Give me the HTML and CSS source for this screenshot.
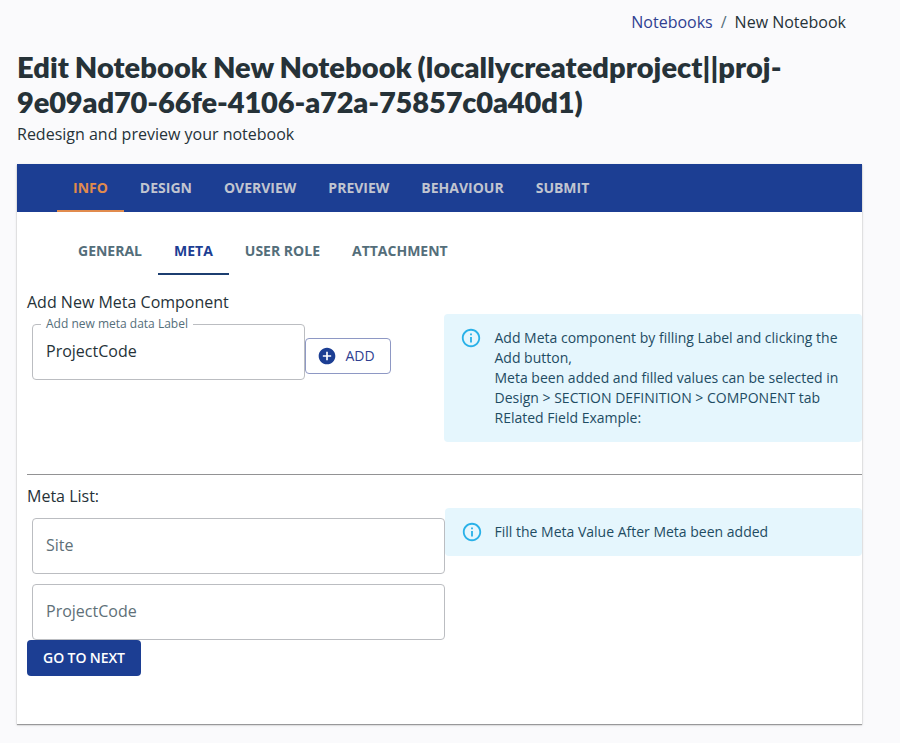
FILE: index.html
```html
<!DOCTYPE html>
<html lang="en">
<head>
<meta charset="utf-8">
<title>Edit Notebook</title>
<link rel="stylesheet" href="styles.css">
</head>
<body>
<main class="page">
  <nav class="breadcrumbs"><a>Notebooks</a><span class="slash">/</span><span>New Notebook</span></nav>
  <header class="heading">
    <h1>Edit Notebook New Notebook (locallycreatedproject||proj-<br><span class="project-id">9e09ad70-66fe-4106-a72a-75857c0a40d1)</span></h1>
    <p>Redesign and preview your notebook</p>
  </header>
  <section class="card">
    <nav class="tabs main-tabs">
      <a class="tab active">INFO</a><a class="tab">DESIGN</a><a class="tab">OVERVIEW</a><a class="tab">PREVIEW</a><a class="tab">BEHAVIOUR</a><a class="tab">SUBMIT</a>
    </nav>
    <nav class="tabs sub-tabs">
      <a class="tab">GENERAL</a><a class="tab active">META</a><a class="tab">USER ROLE</a><a class="tab">ATTACHMENT</a>
    </nav>
    <div class="content">
      <div class="row add-row">
        <div class="column">
          <h2>Add New Meta Component</h2>
          <div class="add-form">
            <fieldset class="field labelled"><legend>Add new meta data Label</legend><span>ProjectCode</span></fieldset>
            <button class="add-button"><svg viewBox="0 0 24 24"><path d="M12 2C6.48 2 2 6.48 2 12s4.48 10 10 10 10-4.48 10-10S17.52 2 12 2zm5 11h-4v4h-2v-4H7v-2h4V7h2v4h4v2z"/></svg>ADD</button>
          </div>
        </div>
        <div class="alert">
          <svg viewBox="0 0 24 24"><path d="M11 7h2v2h-2zm0 4h2v6h-2zm1-9C6.48 2 2 6.48 2 12s4.48 10 10 10 10-4.48 10-10S17.52 2 12 2zm0 18c-4.41 0-8-3.59-8-8s3.59-8 8-8 8 3.59 8 8-3.59 8-8 8z"/></svg>
          <p>Add Meta component by filling Label and clicking the<br>Add button,<br>Meta been added and filled values can be selected in<br>Design &gt; SECTION DEFINITION &gt; COMPONENT tab<br>RElated Field Example:</p>
        </div>
      </div>
      <hr>
      <div class="row list-row">
        <div class="column">
          <h2>Meta List:</h2>
          <div class="meta-list">
            <div class="field empty">Site</div>
            <div class="field empty">ProjectCode</div>
          </div>
        </div>
        <div class="alert">
          <svg viewBox="0 0 24 24"><path d="M11 7h2v2h-2zm0 4h2v6h-2zm1-9C6.48 2 2 6.48 2 12s4.48 10 10 10 10-4.48 10-10S17.52 2 12 2zm0 18c-4.41 0-8-3.59-8-8s3.59-8 8-8 8 3.59 8 8-3.59 8-8 8z"/></svg>
          <p>Fill the Meta Value After Meta been added</p>
        </div>
      </div>
      <button class="next-button">GO TO NEXT</button>
    </div>
  </section>
</main>
</body>
</html>
```
FILE: styles.css
```css
* { box-sizing: border-box; }
body { margin: 0; min-height: 743px; background: #fafafc; color: #263238; font: 16px/24px "Open Sans", sans-serif; overflow: hidden; }
h1, h2, p { margin: 0; }
button { font: inherit; }
.page { width: 845px; margin-left: 17px; padding-top: 10px; }
.breadcrumbs { display: flex; justify-content: flex-end; gap: 8px; height: 24px; padding-right: 16px; }
.breadcrumbs a { color: #303f91; }
.slash { color: #546e7a; }
.heading { padding-top: 15px; height: 130px; }
h1 { font: 800 29px/35px Lato, sans-serif; letter-spacing: 0.07px; word-spacing: -1px; white-space: nowrap; }
.project-id { letter-spacing: -0.14px; }
.heading p { line-height: 24px; margin-top: 3px; }
.card { height: 560px; background: #fff; box-shadow: 0 1px 1px #0005, 0 1px 3px #0002; }
.tabs { display: flex; height: 48px; font-size: 14px; font-weight: 700; }
.tab { display: flex; align-items: center; padding: 0 16px; white-space: nowrap; }
.main-tabs { padding-left: 40px; background: #1c3e93; color: #c1c5d0; }
.main-tabs .active { color: #e18b4d; box-shadow: inset 0 -2px #e18b4d; }
.sub-tabs { margin-top: 15px; padding-left: 45px; color: #546e7a; }
.sub-tabs .active { color: #1c3e93; box-shadow: inset 0 -2px #1c3e70; }
.content { padding: 15px 0 0 10px; }
.row { display: flex; }
.add-row { height: 184px; }
.column { width: 417px; flex: none; }
h2 { font-size: 16px; font-weight: 400; line-height: 24px; }
.alert { display: flex; flex: 1; align-self: flex-start; margin-top: 24px; padding: 14px 16px; border-radius: 4px; background: #e5f6fd; color: #1e4c63; font-size: 14px; line-height: 20px; }
.alert svg { width: 22px; height: 22px; margin: -1px 12.5px -1px 0; flex: none; fill: #29b1e8; }
.alert p { white-space: nowrap; }
.add-form { display: flex; align-items: flex-start; padding: 4px 0 0 5px; }
.field { height: 56px; border: 1px solid #bbbdc1; border-radius: 4px; }
.labelled { width: 273px; height: 62px; margin: 0; padding: 0 13px; }
.labelled legend { margin-left: -5px; padding: 0 5px; color: #546e7a; font-size: 12px; line-height: 12px; }
.labelled span { display: block; margin-top: 9px; }
.add-button { display: flex; align-items: center; justify-content: center; gap: 8px; width: 86px; height: 36px; margin-top: 20px; padding: 0 4px 0 0; border: 1px solid #8e98c4; border-radius: 4px; background: #fff; color: #303f91; font-size: 14px; }
.add-button svg { width: 20px; height: 20px; fill: #1c3e93; }
hr { height: 1px; margin: 0; border: 0; background: #929294; }
.list-row { padding-top: 9px; height: 165px; }
.list-row .column { width: 418px; }
.list-row .alert svg { margin-right: 11.5px; }
.meta-list { display: flex; flex-direction: column; gap: 10px; padding: 10px 0 0 5px; }
.empty { padding: 14px 13px; color: #607078; line-height: 24px; }
.next-button { display: block; width: 114px; height: 36px; padding: 0; border: 0; border-radius: 4px; background: #1c3e93; color: #fff; font-size: 14px; font-weight: 600; letter-spacing: -0.1px; }
```
